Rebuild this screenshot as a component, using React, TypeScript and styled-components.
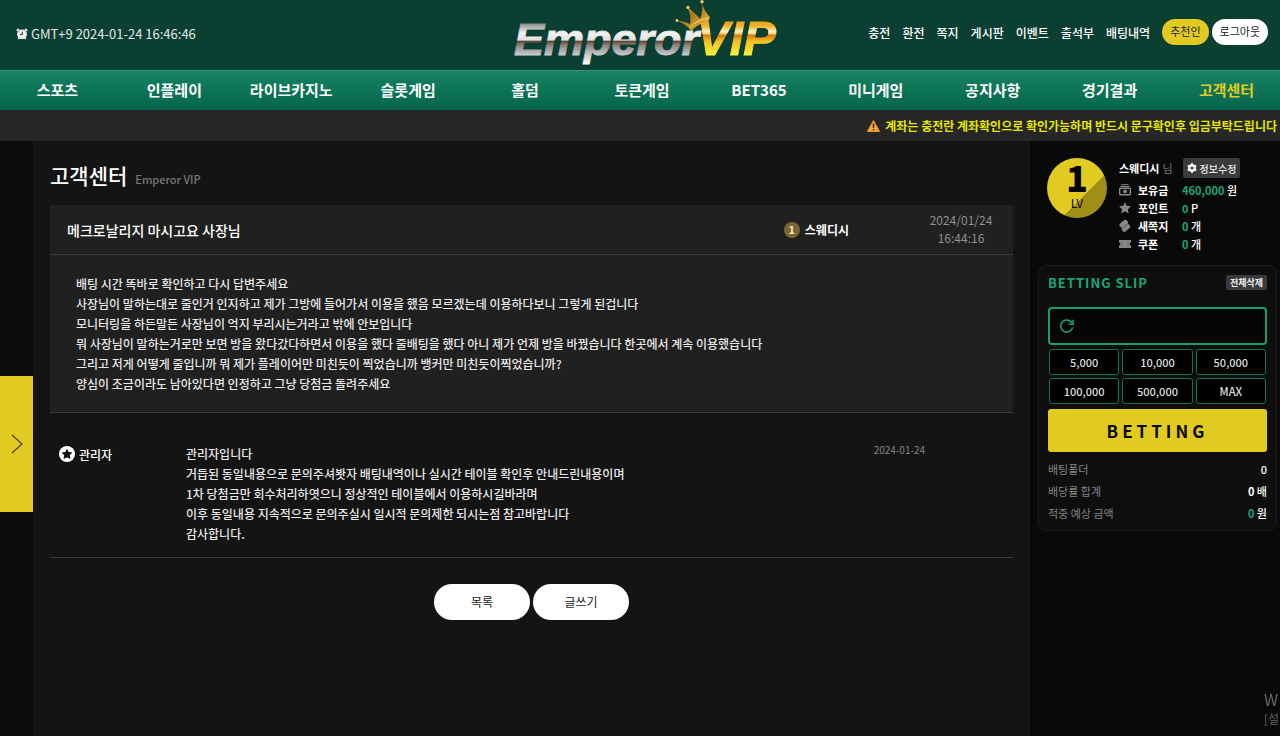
import React from "react";
import styled, { createGlobalStyle, css } from "styled-components";

const GlobalStyle = createGlobalStyle`
  * { box-sizing: border-box; }
  body {
    margin: 0;
    background: #090909;
    color: #fff;
    font-family: "Noto Sans CJK KR", "Noto Sans", sans-serif;
    font-size: 12px;
    overflow-x: hidden;
  }
  button, input { font-family: inherit; }
  a { color: inherit; text-decoration: none; }
  h1, h2, p, dl, dd, dt { margin: 0; }
`;

const Page = styled.div`
  display: flex;
  flex-direction: column;
  min-height: 100vh;
`;

const Header = styled.header`
  display: grid;
  grid-template-columns: 1fr auto 1fr;
  align-items: center;
  height: 70px;
  padding: 0 12px 0 16px;
  background: #0a3f31;
`;

const Clock = styled.div`
  display: flex;
  align-items: center;
  gap: 3px;
  padding-bottom: 3px;
  color: #e2e8e6;
  font-size: 13px;
  svg { display: block; }
`;

const LogoLink = styled.a`
  display: block;
  height: 70px;
  svg { display: block; }
`;

const UserMenu = styled.nav`
  display: flex;
  align-items: center;
  justify-content: flex-end;
  gap: 12px;
  padding-bottom: 6px;
  font-weight: 500;
  white-space: nowrap;
`;

const PillGroup = styled.div`
  display: flex;
  gap: 3px;
`;

const Pill = styled.button<{ $accent?: boolean }>`
  height: 26px;
  padding: 0 8px 2px;
  border: 0;
  border-radius: 13px;
  background: ${(p) => (p.$accent ? "#e2cb20" : "#fff")};
  color: #222;
  font-size: 11px;
`;

const MainNav = styled.nav`
  height: 40px;
  border-top: 1px solid #379077;
  background: linear-gradient(#178263, #046549);
  overflow: hidden;
`;

const NavList = styled.div`
  display: grid;
  grid-template-columns: repeat(11, 1fr);
  margin: 0 -5px 0 -1px;
`;

const NavItem = styled.a<{ $active?: boolean }>`
  line-height: 38px;
  text-align: center;
  font-size: 15px;
  font-weight: 700;
  color: ${(p) => (p.$active ? "#e2cb20" : "#fff")};
`;

const Notice = styled.div`
  display: flex;
  align-items: center;
  justify-content: flex-end;
  gap: 5px;
  height: 31px;
  padding-right: 3px;
  background: #262626;
  color: #e6e600;
  font-weight: 700;
  white-space: nowrap;
`;

const Body = styled.div`
  display: flex;
  flex: 1;
`;

const Rail = styled.div`
  flex: 0 0 33px;
  background: #0c0c0c;
`;

const RailButton = styled.button`
  display: flex;
  align-items: center;
  justify-content: center;
  width: 100%;
  height: 136px;
  margin-top: 235px;
  padding: 0;
  border: 0;
  background: #e2cb20;
`;

const Main = styled.main`
  flex: 1;
  min-width: 0;
  padding: 16px 17px 0;
  background: #141414;
`;

const PageTitle = styled.div`
  display: flex;
  align-items: baseline;
  gap: 8px;
  height: 48px;
  h1 { font-size: 21px; line-height: 36px; font-weight: 500; }
  span { font-size: 11px; font-weight: 500; color: #777; }
`;

const Post = styled.article`
  border-bottom: 1px solid #3a3a3a;
  background: #202020;
`;

const PostHead = styled.header`
  display: flex;
  align-items: center;
  height: 50px;
  padding: 0 20px 0 17px;
  border-bottom: 1px solid #3a3a3a;
  h2 { flex: 1; font-size: 14px; line-height: 20px; font-weight: 500; }
`;

const Author = styled.div`
  display: flex;
  align-items: center;
  gap: 5px;
  font-weight: 700;
`;

const Level = styled.span`
  width: 16px;
  height: 16px;
  border-radius: 50%;
  background: #7a6534;
  color: #f6ecc8;
  font-size: 11px;
  line-height: 15px;
  text-align: center;
`;

const PostTime = styled.time`
  width: 64px;
  margin-left: 80px;
  padding-bottom: 2px;
  color: #919191;
  line-height: 18px;
  text-align: center;
`;

const textBlock = css`
  color: #e8e8e8;
  font-size: 12px;
  font-weight: 500;
  line-height: 20px;
`;

const PostBody = styled.div`
  ${textBlock}
  padding: 19px 26px 18px;
`;

const Reply = styled.article`
  display: flex;
  padding: 31px 88px 13px 9px;
  border-bottom: 1px solid #3a3a3a;
`;

const Admin = styled.div`
  display: flex;
  align-items: center;
  gap: 4px;
  width: 127px;
  height: 20px;
  font-weight: 500;
`;

const ReplyText = styled.div`
  ${textBlock}
  flex: 1;
`;

const ReplyDate = styled.time`
  color: #858585;
  font-size: 10px;
  line-height: 12px;
`;

const Actions = styled.div`
  display: flex;
  justify-content: center;
  gap: 3px;
  padding-top: 26px;
`;

const ActionButton = styled.button`
  width: 96px;
  height: 36px;
  padding: 0 0 1px;
  border: 0;
  border-radius: 18px;
  background: #fff;
  color: #222;
  font-size: 12px;
`;

const Sidebar = styled.aside`
  flex: 0 0 250px;
  padding: 16px 3px 0 8px;
  background: #090909;
`;

const Profile = styled.section`
  display: flex;
  gap: 12px;
  height: 108px;
  padding: 1px 0 0 9px;
`;

const LevelBadge = styled.div`
  display: flex;
  flex-direction: column;
  align-items: center;
  width: 60px;
  height: 60px;
  border-radius: 50%;
  background: linear-gradient(135deg, #e2cb20 62%, #a08e17 62%);
  color: #050505;
  strong { font-size: 36px; line-height: 36px; font-weight: 900; }
  span { font-size: 12px; line-height: 18px; }
`;

const NameRow = styled.div`
  display: flex;
  align-items: center;
  gap: 3px;
  height: 20px;
  margin-bottom: 3px;
  font-size: 11px;
  span { color: #777; }
`;

const SmallButton = styled.button<{ $compact?: boolean }>`
  display: flex;
  align-items: center;
  gap: 3px;
  height: ${(p) => (p.$compact ? "15px" : "20px")};
  margin: 0;
  margin-left: ${(p) => (p.$compact ? "0" : "7px")};
  padding: 0 4px;
  border: 0;
  border-radius: 2px;
  background: #3b3b3b;
  color: #eee;
  font-size: ${(p) => (p.$compact ? "9px" : "10px")};
  font-weight: ${(p) => (p.$compact ? 700 : 500)};
`;

const Stat = styled.div`
  display: grid;
  grid-template-columns: 19px 44px auto;
  align-items: center;
  height: 18px;
  font-size: 11px;
  dt { font-weight: 700; }
  dd { font-weight: 500; }
  svg { display: block; }
`;

const Green = styled.strong`
  color: #14a67a;
`;

const Slip = styled.section`
  padding: 8px 9px 6px;
  border: 1px solid #1d1d1d;
  border-radius: 9px;
  background: #0e0e0e;
`;

const SlipHead = styled.div`
  display: flex;
  align-items: center;
  justify-content: space-between;
  height: 17px;
  margin-bottom: 16px;
  h2 { color: #14a67a; font-size: 13px; letter-spacing: 1px; }
`;

const AmountBox = styled.div`
  display: flex;
  align-items: center;
  height: 38px;
  padding: 0 10px;
  border: 2px solid #12a075;
  border-radius: 4px;
  background: #050505;
  button { display: flex; padding: 0; border: 0; background: none; }
  input {
    flex: 1;
    min-width: 0;
    border: 0;
    outline: 0;
    background: none;
    color: #fff;
    text-align: right;
  }
`;

const ChipGrid = styled.div`
  display: grid;
  grid-template-columns: repeat(3, 1fr);
  gap: 3px;
  padding: 4px 1px 5px;
`;

const Chip = styled.button`
  height: 26px;
  padding: 0 0 1px;
  border: 1px solid #107153;
  border-radius: 3px;
  background: #000;
  color: #ddd;
  font-size: 11px;
  font-weight: 500;
`;

const BetButton = styled.button`
  width: 100%;
  height: 43px;
  margin-bottom: 6px;
  padding: 0;
  border: 0;
  border-radius: 3px;
  background: #e2cb20;
  color: #080808;
  font-size: 17px;
  font-weight: 700;
  letter-spacing: 4px;
`;

const Total = styled.div`
  display: flex;
  justify-content: space-between;
  font-size: 11px;
  line-height: 22px;
  dt { color: #858585; }
  dd { font-weight: 500; }
`;

const Watermark = styled.div`
  position: fixed;
  right: 0;
  bottom: 7px;
  width: 16px;
  color: #666;
  white-space: nowrap;
  line-height: 20px;
  p:first-child { font-size: 16px; }
  p:last-child { font-size: 12px; }
`;

const AlarmIcon = () => (
  <svg width="12" height="12" viewBox="0 0 12 12" aria-hidden="true">
    <path d="M.8 2.800 2.900.9M9.100.9l2.100 1.900M2.200 11l1.300-1.500M9.800 11 8.500 9.500" stroke="#eee" strokeWidth="1.800" />
    <circle cx="6" cy="6.300" r="4.900" fill="#eee" />
    <path d="M6.300 3.700v2.900H4" fill="none" stroke="#0a3f31" />
  </svg>
);

const Logo = () => (
  <svg width="270" height="70" viewBox="507 0 270 70" overflow="visible" role="img" aria-label="Emperor VIP">
    <defs>
      <linearGradient id="chrome" gradientUnits="userSpaceOnUse" x1="0" y1="22" x2="0" y2="64">
        <stop offset="0" stopColor="#6f7472" />
        <stop offset=".1" stopColor="#a9a9a9" />
        <stop offset=".26" stopColor="#f2f2f2" />
        <stop offset=".43" stopColor="#e4e0de" />
        <stop offset=".46" stopColor="#5b4640" />
        <stop offset=".53" stopColor="#94705f" />
        <stop offset=".57" stopColor="#8b8b8b" />
        <stop offset=".78" stopColor="#c9c9c9" />
        <stop offset="1" stopColor="#fff" />
      </linearGradient>
      <linearGradient id="gold" gradientUnits="userSpaceOnUse" x1="0" y1="20" x2="0" y2="55">
        <stop offset="0" stopColor="#e79a16" />
        <stop offset=".18" stopColor="#f0b62c" />
        <stop offset=".34" stopColor="#fff3ca" />
        <stop offset=".4" stopColor="#f7c35a" />
        <stop offset=".44" stopColor="#d97a0c" />
        <stop offset=".6" stopColor="#f2bf20" />
        <stop offset="1" stopColor="#fbf03a" />
      </linearGradient>
      <linearGradient id="crown" x1="0" y1="0" x2="1" y2="1">
        <stop offset="0" stopColor="#e9c04e" />
        <stop offset=".45" stopColor="#a87a1a" />
        <stop offset=".75" stopColor="#d9a52c" />
        <stop offset="1" stopColor="#f8e9a0" />
      </linearGradient>
    </defs>
    <g fontFamily="Liberation Sans, Arial, sans-serif" fontWeight="700" fontStyle="italic">
      <text x="514" y="55" fontSize="45" fill="url(#chrome)" stroke="url(#chrome)">Emperor</text>
      <text x="697" y="55" fontSize="49" fill="url(#gold)" stroke="url(#gold)">VIP</text>
    </g>
    <path d="M691 31C688 26 683 23 677 21c5 0 9 1 13 3C691 18 690 13 688 8c5 3 9 7 12 11 2-5 3-11 2-17 1 6 4 11 8 15-1 2-1 3-2 5-7 1-12 4-17 9z" fill="url(#crown)" />
    <path d="M689.500 27.500c5-5 12-8.500 19.500-9.500" fill="none" stroke="#f6dd82" />
    <g fill="#edc955">
      <circle cx="677" cy="20.500" r="1.500" />
      <circle cx="688" cy="7.500" r="1.700" />
      <circle cx="702" cy="1.800" r="1.700" />
    </g>
  </svg>
);

const WarningIcon = () => (
  <svg width="13" height="12" viewBox="0 0 13 12" aria-hidden="true">
    <path d="M6.500.5 12.600 11.500H.4z" fill="#f4a72f" stroke="#e5942b" strokeLinejoin="round" />
    <path d="M6.500 3.500v4.300M6.500 9v1.300" stroke="#222" strokeWidth="1.500" />
  </svg>
);

const StarBadge = () => (
  <svg width="16" height="16" viewBox="0 0 16 16" aria-hidden="true">
    <circle cx="8" cy="8" r="8" fill="#fff" />
    <path d="m8 3.600 1.400 2.900 3.200.4-2.300 2.200.6 3.200L8 10.800l-2.900 1.500.6-3.200-2.300-2.200 3.200-.4z" fill="#111" stroke="#111" strokeLinejoin="round" />
  </svg>
);

const GearIcon = () => (
  <svg width="10" height="10" viewBox="0 0 10 10" aria-hidden="true">
    <circle cx="5" cy="5" r="3.800" fill="#fff" />
    <path d="M5 .2v9.600M.8 2.600l8.400 4.800M.8 7.400l8.400-4.800" stroke="#fff" strokeWidth="2" />
    <circle cx="5" cy="5" r="1.500" fill="#3b3b3b" />
  </svg>
);

const statIcons = {
  cash: (
    <>
      <path d="M2.500.7h7M1.500 2.500h9" stroke="#888" />
      <rect x=".7" y="4.200" width="10.600" height="6.500" rx=".8" fill="none" stroke="#888" strokeWidth="1.400" />
      <circle cx="6" cy="7.400" r="1.900" fill="#888" />
    </>
  ),
  star: <path d="m6 0 1.700 3.800 4.300.5-3.200 2.900.9 4.300L6 9.300l-3.700 2.200.9-4.300L0 4.300l4.300-.5z" fill="#888" />,
  ticket: (
    <g transform="rotate(-40 6 6)" fill="#888">
      <rect x="2" y="1" width="9" height="5" rx="1.800" />
      <rect x="1" y="5.500" width="9" height="5" rx="1.800" />
      <path d="M3 6h7" stroke="#444" strokeWidth=".7" />
    </g>
  ),
  coupon: (
    <>
      <path d="M0 2h12v2.600a1.400 1.400 0 0 0 0 2.800V10H0V7.400a1.400 1.400 0 0 0 0-2.800z" fill="#888" />
      <path d="M3 3.500v5M9 3.500v5" stroke="#555" strokeDasharray="1 1" />
    </>
  ),
};

const ReloadIcon = () => (
  <svg width="14" height="14" viewBox="0 0 14 14" fill="none" stroke="#12a075" strokeWidth="1.600" aria-hidden="true">
    <path d="M12.600 8.300A6 6 0 1 1 12 4.200" />
    <path d="M13 .8v4.400H8.600" />
  </svg>
);

const menu = ["충전", "환전", "쪽지", "게시판", "이벤트", "출석부", "배팅내역"];
const nav = ["스포츠", "인플레이", "라이브카지노", "슬롯게임", "홀덤", "토큰게임", "BET365", "미니게임", "공지사항", "경기결과", "고객센터"];
const question = [
  "배팅 시간 똑바로 확인하고 다시 답변주세요",
  "사장님이 말하는대로 줄인거 인지하고 제가 그방에 들어가서 이용을 했음 모르겠는데 이용하다보니 그렇게 된겁니다",
  "모니터링을 하든말든 사장님이 억지 부리시는거라고 밖에 안보입니다",
  "뭐 사장님이 말하는거로만 보면 방을 왔다갔다하면서 이용을 했다 줄배팅을 했다 아니 제가 언제 방을 바꿨습니다 한곳에서 계속 이용했습니다",
  "그리고 저게 어떻게 줄입니까 뭐 제가 플레이어만 미친듯이 찍었습니까 뱅커만 미친듯이찍었습니까?",
  "양심이 조금이라도 남아있다면 인정하고 그냥 당첨금 돌려주세요",
];
const answer = [
  "관리자입니다",
  "거듭된 동일내용으로 문의주셔봣자 배팅내역이나 실시간 테이블 확인후 안내드린내용이며",
  "1차 당첨금만 회수처리하엿으니 정상적인 테이블에서 이용하시길바라며",
  "이후 동일내용 지속적으로 문의주실시 일시적 문의제한 되시는점 참고바랍니다",
  "감사합니다.",
];
const stats: { icon: keyof typeof statIcons; label: string; value: string; unit: string }[] = [
  { icon: "cash", label: "보유금", value: "460,000", unit: "원" },
  { icon: "star", label: "포인트", value: "0", unit: "P" },
  { icon: "ticket", label: "새쪽지", value: "0", unit: "개" },
  { icon: "coupon", label: "쿠폰", value: "0", unit: "개" },
];
const chips = ["5,000", "10,000", "50,000", "100,000", "500,000", "MAX"];

export default function App() {
  return (
    <Page>
      <GlobalStyle />
      <Header>
        <Clock><AlarmIcon />GMT+9 2024-01-24 16:46:46</Clock>
        <LogoLink href="#"><Logo /></LogoLink>
        <UserMenu>
          {menu.map((m) => <a href="#" key={m}>{m}</a>)}
          <PillGroup>
            <Pill $accent>추천인</Pill>
            <Pill>로그아웃</Pill>
          </PillGroup>
        </UserMenu>
      </Header>
      <MainNav>
        <NavList>
          {nav.map((n) => <NavItem href="#" key={n} $active={n === "고객센터"}>{n}</NavItem>)}
        </NavList>
      </MainNav>
      <Notice><WarningIcon />계좌는 충전란 계좌확인으로 확인가능하며 반드시 문구확인후 입금부탁드립니다</Notice>
      <Body>
        <Rail>
          <RailButton aria-label="메뉴 열기">
            <svg width="12" height="20" viewBox="0 0 12 20" fill="none" stroke="#4a430c" strokeWidth="1.200" aria-hidden="true">
              <path d="m1 1 10 9-10 9" />
            </svg>
          </RailButton>
        </Rail>
        <Main>
          <PageTitle><h1>고객센터</h1><span>Emperor VIP</span></PageTitle>
          <Post>
            <PostHead>
              <h2>메크로날리지 마시고요 사장님</h2>
              <Author><Level>1</Level>스웨디시</Author>
              <PostTime>2024/01/24<br />16:44:16</PostTime>
            </PostHead>
            <PostBody>{question.map((q) => <p key={q}>{q}</p>)}</PostBody>
          </Post>
          <Reply>
            <Admin><StarBadge />관리자</Admin>
            <ReplyText>{answer.map((a) => <p key={a}>{a}</p>)}</ReplyText>
            <ReplyDate>2024-01-24</ReplyDate>
          </Reply>
          <Actions>
            <ActionButton>목록</ActionButton>
            <ActionButton>글쓰기</ActionButton>
          </Actions>
        </Main>
        <Sidebar>
          <Profile>
            <LevelBadge><strong>1</strong><span>LV</span></LevelBadge>
            <div>
              <NameRow>
                <strong>스웨디시</strong><span>님</span>
                <SmallButton><GearIcon />정보수정</SmallButton>
              </NameRow>
              <dl>
                {stats.map((s) => (
                  <Stat key={s.label}>
                    <svg width="12" height="12" viewBox="0 0 12 12" aria-hidden="true">{statIcons[s.icon]}</svg>
                    <dt>{s.label}</dt>
                    <dd><Green>{s.value}</Green> {s.unit}</dd>
                  </Stat>
                ))}
              </dl>
            </div>
          </Profile>
          <Slip>
            <SlipHead>
              <h2>BETTING SLIP</h2>
              <SmallButton $compact>전체삭제</SmallButton>
            </SlipHead>
            <AmountBox>
              <button aria-label="초기화"><ReloadIcon /></button>
              <input aria-label="배팅금액" />
            </AmountBox>
            <ChipGrid>{chips.map((c) => <Chip key={c}>{c}</Chip>)}</ChipGrid>
            <BetButton>BETTING</BetButton>
            <dl>
              <Total><dt>배팅폴더</dt><dd>0</dd></Total>
              <Total><dt>배당률 합계</dt><dd><strong>0</strong> 배</dd></Total>
              <Total><dt>적중 예상 금액</dt><dd><Green>0</Green> 원</dd></Total>
            </dl>
          </Slip>
        </Sidebar>
      </Body>
      <Watermark aria-hidden="true"><p>W</p><p>[설</p></Watermark>
    </Page>
  );
}
